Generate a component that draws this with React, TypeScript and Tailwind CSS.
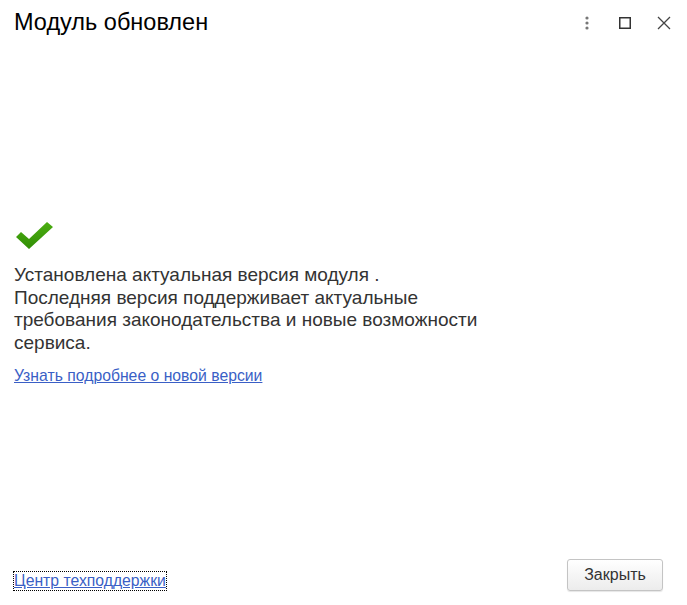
import React from "react";

export default function App() {
  return (
    <div
      className="w-[687px] h-[605px] bg-white flex flex-col relative overflow-hidden text-[#333]"
      style={{ fontFamily: '"Liberation Sans", Arial, sans-serif' }}
    >
      <div className="flex items-center h-[46px] pl-[14px] pr-[16px]">
        <div className="text-[23.5px] text-black flex-1 leading-none">Модуль обновлен</div>
        <div className="flex items-center">
          <svg width="12" height="16" viewBox="0 0 12 16" className="mr-[26px]">
            <circle cx="6" cy="3" r="1.6" fill="#777" />
            <circle cx="6" cy="8" r="1.6" fill="#777" />
            <circle cx="6" cy="13" r="1.6" fill="#777" />
          </svg>
          <svg width="12" height="12" viewBox="0 0 12 12" className="mr-[26px]">
            <rect x="0.75" y="0.75" width="10.5" height="10.5" fill="none" stroke="#333" strokeWidth="1.5" />
          </svg>
          <svg width="14" height="14" viewBox="0 0 14 14">
            <path d="M1 1 L13 13 M13 1 L1 13" stroke="#444" strokeWidth="1.3" />
          </svg>
        </div>
      </div>
      <div className="flex-1 flex flex-col pl-[14px] pt-[176px]">
        <svg width="38" height="28" viewBox="0 0 38 28" className="ml-[2px] mb-[14px]">
          <defs>
            <linearGradient id="g" x1="0" y1="0" x2="0" y2="1">
              <stop offset="0" stopColor="#4cae12" />
              <stop offset="1" stopColor="#318e05" />
            </linearGradient>
          </defs>
          <path d="M0 15 L5 10 L13 17 L31 0 L37 5 L13 27 Z" fill="url(#g)" />
        </svg>
        <div className="text-[19px] leading-[22.5px] text-[#333]">
          <div>Установлена актуальная версия модуля .</div>
          <div>Последняя версия поддерживает актуальные</div>
          <div>требования законодательства и новые возможности</div>
          <div>сервиса.</div>
        </div>
        <a className="mt-[12px] text-[15.75px] text-[#3a5fc6] underline w-fit leading-[20px]" href="#">
          Узнать подробнее о новой версии
        </a>
      </div>
      <div className="flex items-end justify-between pl-[14px] pr-[24px] pb-[14px]">
        <a className="text-[15.75px] text-[#3a5fc6] underline leading-[18px] outline outline-1 outline-dotted outline-black mb-[1px]" href="#">
          Центр техподдержки
        </a>
        <button className="w-[96px] h-[32px] rounded-[3px] border border-[#c4c4c4] bg-gradient-to-b from-white to-[#ececec] text-[16px] text-[#333] shadow-[0_1px_1px_rgba(0,0,0,0.1)]">
          Закрыть
        </button>
      </div>
    </div>
  );
}
